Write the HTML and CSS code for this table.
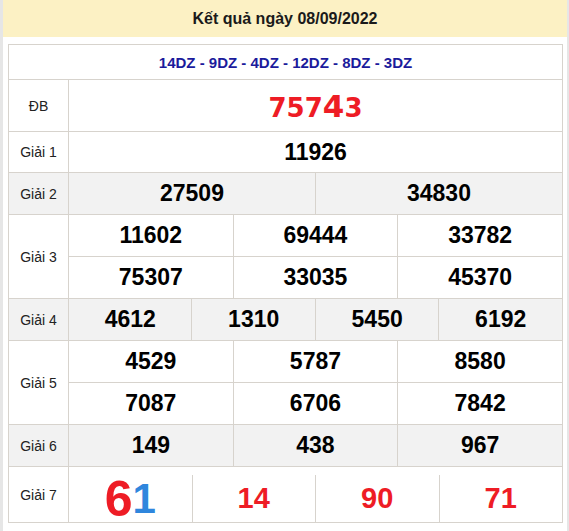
FILE: index.html
```html
<!DOCTYPE html>
<html lang="vi">
<head>
<meta charset="utf-8">
<title>Kết quả ngày 08/09/2022</title>
<link rel="stylesheet" href="styles.css">
</head>
<body>
<div class="page">
  <div class="head">Kết quả ngày 08/09/2022</div>
  <div class="panel">
    <table class="kq">
      <colgroup>
        <col class="c-label">
        <col span="12">
      </colgroup>
      <tr class="r-code">
        <td colspan="13" class="codes">14DZ - 9DZ - 4DZ - 12DZ - 8DZ - 3DZ</td>
      </tr>
      <tr class="r-db">
        <td class="lbl">ĐB</td>
        <td colspan="12" class="db">757<span class="db-big">4</span>3</td>
      </tr>
      <tr class="r-n r-first">
        <td class="lbl">Giải 1</td>
        <td colspan="12" class="num">11926</td>
      </tr>
      <tr class="r-n alt">
        <td class="lbl">Giải 2</td>
        <td colspan="6" class="num">27509</td>
        <td colspan="6" class="num">34830</td>
      </tr>
      <tr class="r-n">
        <td class="lbl" rowspan="2">Giải 3</td>
        <td colspan="4" class="num">11602</td>
        <td colspan="4" class="num">69444</td>
        <td colspan="4" class="num">33782</td>
      </tr>
      <tr class="r-n">
        <td colspan="4" class="num">75307</td>
        <td colspan="4" class="num">33035</td>
        <td colspan="4" class="num">45370</td>
      </tr>
      <tr class="r-n alt">
        <td class="lbl">Giải 4</td>
        <td colspan="3" class="num">4612</td>
        <td colspan="3" class="num">1310</td>
        <td colspan="3" class="num">5450</td>
        <td colspan="3" class="num">6192</td>
      </tr>
      <tr class="r-n">
        <td class="lbl" rowspan="2">Giải 5</td>
        <td colspan="4" class="num">4529</td>
        <td colspan="4" class="num">5787</td>
        <td colspan="4" class="num">8580</td>
      </tr>
      <tr class="r-n">
        <td colspan="4" class="num">7087</td>
        <td colspan="4" class="num">6706</td>
        <td colspan="4" class="num">7842</td>
      </tr>
      <tr class="r-n alt">
        <td class="lbl">Giải 6</td>
        <td colspan="4" class="num">149</td>
        <td colspan="4" class="num">438</td>
        <td colspan="4" class="num">967</td>
      </tr>
      <tr class="r-g7">
        <td class="lbl">Giải 7</td>
        <td colspan="12" class="g7">
          <div class="g7-row">
            <div class="g7-cell"><span class="g7-six">6</span><span class="g7-one">1</span></div>
            <div class="g7-cell">14</div>
            <div class="g7-cell">90</div>
            <div class="g7-cell">71</div>
          </div>
        </td>
      </tr>
    </table>
  </div>
</div>
</body>
</html>
```

FILE: styles.css
```css
html, body {
  margin: 0;
  padding: 0;
  background: #e6e6e6;
  font-family: "Liberation Sans", Arial, sans-serif;
}

.page {
  margin-left: 3px;
  width: 564px;
  min-height: 531px;
  background: #fff;
}

.head {
  height: 37px;
  background: #fcf1c4;
  display: flex;
  align-items: center;
  justify-content: center;
  font-size: 16px;
  font-weight: bold;
  color: #1a1a1a;
}

.panel {
  padding: 7px 4px 10px 5px;
}

.kq {
  width: 555px;
  table-layout: fixed;
  border-collapse: collapse;
}

.kq td {
  border: 1px solid #d7d3cd;
  padding: 0;
  text-align: center;
  vertical-align: middle;
}

.c-label {
  width: 60px;
}

.r-code td { height: 34px; }
.r-db td { height: 51px; }
.r-n td { height: 41px; }
.r-first td { height: 40px; }
.r-g7 td { height: 55px; }

.alt td {
  background: #f2f2f2;
}

.codes {
  font-size: 15px;
  font-weight: bold;
  color: #1b1b9c;
}

.lbl {
  font-size: 14px;
  color: #222;
}

.num {
  font-size: 23px;
  font-weight: bold;
  color: #000;
}

.db {
  font-family: "DejaVu Sans", sans-serif;
  font-size: 26px;
  font-weight: bold;
  color: #ee1c25;
}

.db-big {
  font-size: 31px;
}

.kq td.g7 {
  vertical-align: bottom;
}

.g7-row {
  display: flex;
  height: 47px;
  margin-top: 8px;
}

.g7-cell {
  flex: 1;
  display: flex;
  align-items: center;
  justify-content: center;
  font-size: 29px;
  font-weight: bold;
  color: #ee1c25;
  border-left: 1px solid #d7d3cd;
}

.g7-cell:first-child {
  border-left: 0;
}

.g7-six {
  font-size: 50px;
  color: #ee1c25;
  line-height: 1;
}

.g7-one {
  font-size: 42px;
  color: #2f86dd;
  line-height: 1;
}
```
